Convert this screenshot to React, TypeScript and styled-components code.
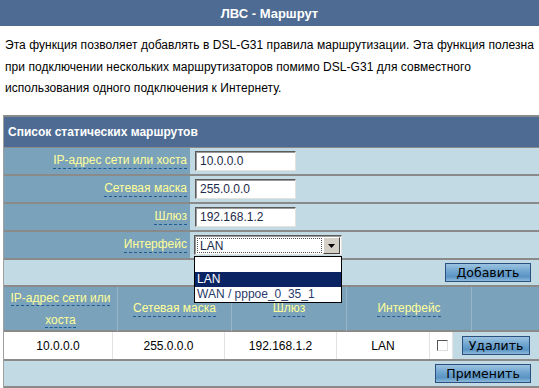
import React from "react";
import styled, { createGlobalStyle } from "styled-components";

const Global = createGlobalStyle`
  html, body { margin: 0; padding: 0; background: #fff; overflow: hidden; }
  body { font-family: "Liberation Sans", Arial, sans-serif; font-size: 12px; color: #000; }
`;

const Page = styled.div`
  width: 539px;
  height: 388px;
  position: relative;
`;

const TitleBar = styled.div`
  height: 26px;
  background: #4e6c93;
  color: #fff;
  font-weight: bold;
  font-size: 13px;
  display: flex;
  align-items: center;
  justify-content: center;
`;

const Desc = styled.p`
  margin: 0;
  padding: 9px 5px 0 5px;
  line-height: 21.5px;
  font-size: 12px;
  letter-spacing: 0.05px;
  height: 89px;
  box-sizing: border-box;
`;

const Panel = styled.div`
  margin-left: 3px;
  border-top: 2px solid #8a8a8a;
  border-left: 1px solid #a0a0a0;
  position: relative;
`;

const SectionHead = styled.div`
  height: 30px;
  background: #4e6c93;
  color: #fff;
  font-weight: bold;
  display: flex;
  align-items: center;
  padding-left: 4px;
  border-bottom: 1px solid #8a8a8a;
`;

const FormRow = styled.div`
  display: grid;
  grid-template-columns: 188px 1fr;
  height: 26px;
  border-bottom: 2px solid #8a8a8a;
`;

const LabelCell = styled.div`
  background: #7aa2bb;
  display: flex;
  align-items: center;
  justify-content: flex-end;
  padding-right: 3px;
  border-right: 2px solid #c2dae3;
`;

const Hint = styled.span`
  color: #ffff99;
  border-bottom: 1px dashed #1f5c96;
  line-height: 15px;
`;

const ValueCell = styled.div`
  background: #c2dae3;
  display: flex;
  align-items: center;
  padding-left: 3px;
`;

const TextInput = styled.input`
  width: 101px;
  height: 20px;
  box-sizing: border-box;
  border: 1px solid;
  border-color: #5a5a5a #e4e2dc #e4e2dc #5a5a5a;
  box-shadow: inset 1px 1px 0 #9a9a9a;
  font-family: "Liberation Sans", Arial, sans-serif;
  font-size: 12px;
  color: #1c2a4a;
  padding: 0 4px;
  margin: 0;
  background: #fff;
  outline: none;
`;

const SelectBox = styled.div`
  width: 148px;
  height: 20px;
  box-sizing: border-box;
  border: 1px solid;
  border-color: #5a5a5a #e4e2dc #e4e2dc #5a5a5a;
  box-shadow: inset 1px 1px 0 #9a9a9a;
  background: #fff;
  display: flex;
  margin-left: -1px;
  position: relative;
  padding: 1px 1px 0 1px;
`;

const SelectText = styled.div`
  flex: 1;
  margin: 1px;
  border: 1px dotted #555;
  display: flex;
  align-items: center;
  padding-left: 2px;
  color: #1c2a4a;
`;

const Arrow = styled.div`
  width: 15px;
  background: #d4d0c8;
  border: 1px solid;
  border-color: #fff #404040 #404040 #fff;
  display: flex;
  align-items: center;
  justify-content: center;
`;

const DropList = styled.div`
  position: absolute;
  left: -1px;
  top: 20px;
  width: 148px;
  box-sizing: border-box;
  border: 1px solid #000;
  background: #fff;
  z-index: 5;
`;

const Option = styled.div<{ $sel?: boolean }>`
  height: 15px;
  line-height: 15px;
  padding-left: 2px;
  font-size: 12px;
  background: ${(p) => (p.$sel ? "#0a2463" : "#fff")};
  color: ${(p) => (p.$sel ? "#fff" : "#2a3a6a")};
`;

const ButtonRow = styled.div<{ $h: number }>`
  height: ${(p) => p.$h}px;
  background: #c2dae3;
  display: flex;
  align-items: center;
  justify-content: flex-end;
  padding-right: 8px;
  border-bottom: 2px solid #8a8a8a;
`;

const Btn = styled.button<{ $w: number }>`
  width: ${(p) => p.$w}px;
  height: 19px;
  box-sizing: border-box;
  border: 1px solid #2b4f7e;
  background: linear-gradient(to bottom, #9cc3e0 0%, #6ea4cf 45%, #5a94c4 75%, #8dbadb 100%);
  font-family: "DejaVu Sans", Verdana, sans-serif;
  font-size: 12.5px;
  color: #000;
  padding: 0;
  line-height: 16px;
  margin: 0;
`;

const HeadGrid = styled.div`
  display: grid;
  grid-template-columns: 114px 114px 115px 125px 1fr;
  background: #7aa2bb;
  height: 43px;
  border-bottom: 2px solid #8a8a8a;
`;

const HeadCell = styled.div`
  display: flex;
  align-items: center;
  justify-content: center;
  text-align: center;
  line-height: 22px;
  border-right: 1px solid #98b6c8;
  &:last-child { border-right: none; }
`;

const DataGrid = styled.div`
  display: grid;
  grid-template-columns: 109px 112px 112px 93px 23px 1fr;
  background: #fff;
  height: 27px;
  border-bottom: 2px solid #8a8a8a;
`;

const DataCell = styled.div<{ $bg?: string }>`
  display: flex;
  align-items: center;
  justify-content: center;
  border-right: 1px solid #e2e2e2;
  background: ${(p) => p.$bg || "#fff"};
  &:last-child { border-right: none; }
`;

const Check = styled.span`
  width: 11px;
  height: 11px;
  box-sizing: border-box;
  border: 1px solid;
  border-color: #555 #ddd #ddd #555;
  background: #fff;
  display: inline-block;
  margin-left: 2px;
`;

export default function App() {
  return (
    <Page>
      <Global />
      <TitleBar>ЛВС - Маршрут</TitleBar>
      <Desc>
        Эта функция позволяет добавлять в DSL-G31 правила маршрутизации. Эта функция полезна при подключении нескольких маршрутизаторов помимо DSL-G31 для совместного использования одного подключения к Интернету.
      </Desc>
      <Panel>
        <SectionHead>Список статических маршрутов</SectionHead>
        <FormRow>
          <LabelCell><Hint>IP-адрес сети или хоста</Hint></LabelCell>
          <ValueCell><TextInput defaultValue="10.0.0.0" /></ValueCell>
        </FormRow>
        <FormRow>
          <LabelCell><Hint>Сетевая маска</Hint></LabelCell>
          <ValueCell><TextInput defaultValue="255.0.0.0" /></ValueCell>
        </FormRow>
        <FormRow>
          <LabelCell><Hint>Шлюз</Hint></LabelCell>
          <ValueCell><TextInput defaultValue="192.168.1.2" /></ValueCell>
        </FormRow>
        <FormRow>
          <LabelCell><Hint>Интерфейс</Hint></LabelCell>
          <ValueCell>
            <SelectBox>
              <SelectText>LAN</SelectText>
              <Arrow>
                <svg width="7" height="4" viewBox="0 0 7 4"><path d="M0 0h7L3.5 4z" fill="#000" /></svg>
              </Arrow>
              <DropList>
                <Option />
                <Option $sel>LAN</Option>
                <Option>WAN / pppoe_0_35_1</Option>
              </DropList>
            </SelectBox>
          </ValueCell>
        </FormRow>
        <ButtonRow $h={25}>
          <Btn $w={86}>Добавить</Btn>
        </ButtonRow>
        <HeadGrid>
          <HeadCell><span><Hint>IP-адрес сети или</Hint><br /><Hint>хоста</Hint></span></HeadCell>
          <HeadCell><Hint>Сетевая маска</Hint></HeadCell>
          <HeadCell><Hint>Шлюз</Hint></HeadCell>
          <HeadCell><Hint>Интерфейс</Hint></HeadCell>
          <HeadCell />
        </HeadGrid>
        <DataGrid>
          <DataCell>10.0.0.0</DataCell>
          <DataCell>255.0.0.0</DataCell>
          <DataCell>192.168.1.2</DataCell>
          <DataCell>LAN</DataCell>
          <DataCell><Check /></DataCell>
          <DataCell $bg="#c2dae3"><Btn $w={68}>Удалить</Btn></DataCell>
        </DataGrid>
        <ButtonRow $h={25}>
          <Btn $w={96}>Применить</Btn>
        </ButtonRow>
      </Panel>
    </Page>
  );
}
